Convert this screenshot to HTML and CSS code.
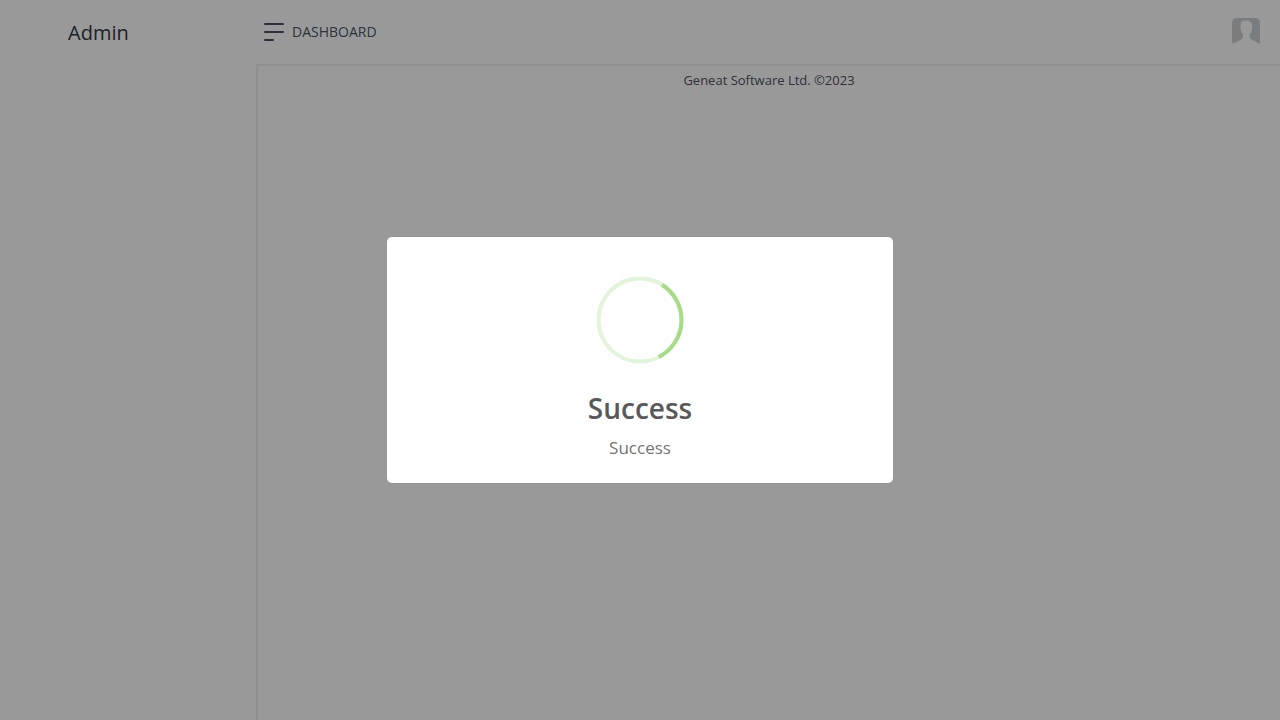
FILE: index.html
```html
<!DOCTYPE html>
<html lang="en">
<head>
  <meta charset="utf-8">
  <meta name="viewport" content="width=device-width, initial-scale=1">
  <title>Dashboard</title>
  <link rel="stylesheet" href="styles.css">
</head>
<body>
  <div class="layout">
    <aside class="sidebar">
      <h1 class="brand">Admin</h1>
    </aside>
    <div class="main">
      <header class="topbar">
        <button class="menu-button" type="button" aria-label="Toggle menu">
          <svg width="20" height="20" viewBox="0 0 20 20" fill="none" stroke="currentColor" stroke-width="2" stroke-linecap="round" aria-hidden="true">
            <path d="M1 2H19M1 10H19M1 18H9"/>
          </svg>
        </button>
        <span class="page-title">DASHBOARD</span>
        <button class="avatar" type="button" aria-label="Account">
          <svg width="28" height="28" viewBox="0 0 28 28" aria-hidden="true">
            <path fill="currentColor" d="M5 0H23Q28 0 28 5V26L19.500 21.500Q17.500 20.500 17.500 18.500V16.500Q19.500 14 20 11V7.500Q20 2.500 14 2.500T8.500 7.500V11Q9 14 11 16.500V18.500Q11 20.500 9 21.500L1 26Q0 24 0 23V5Q0 0 5 0Z"/>
          </svg>
        </button>
      </header>
      <main class="content">
        <footer class="footer">Geneat Software Ltd. ©2023</footer>
      </main>
    </div>
  </div>

  <div class="overlay">
    <div class="dialog" role="dialog" aria-modal="true" aria-labelledby="dialog-title" aria-describedby="dialog-text">
      <svg class="dialog-icon" width="88" height="88" viewBox="0 0 88 88" fill="none" stroke-width="4" aria-hidden="true">
        <circle cx="44" cy="44" r="41.500" stroke="#e4f4db"/>
        <path d="M66 8.800A41.500 41.500 0 0 1 62.800 81" stroke="#a5dc86"/>
      </svg>
      <h2 class="dialog-title" id="dialog-title">Success</h2>
      <p class="dialog-text" id="dialog-text">Success</p>
    </div>
  </div>
</body>
</html>
```
FILE: styles.css
```css
* {
  box-sizing: border-box;
}

body {
  margin: 0;
  background: #fff;
  color: #4b5563;
  font: 13px/20px "Open Sans", "Noto Sans", sans-serif;
}

.layout {
  display: flex;
  min-height: 100vh;
}

.sidebar {
  width: 256px;
  flex: none;
  padding: 0 68px;
}

.brand {
  margin: 0;
  color: #303846;
  font-size: 20px;
  font-weight: 500;
  line-height: 66px;
}

.main {
  flex: 1;
  display: flex;
  flex-direction: column;
}

.topbar {
  height: 64px;
  display: flex;
  align-items: center;
  padding: 0 20px 0 8px;
}

.menu-button,
.avatar {
  display: flex;
  border: 0;
  padding: 0;
  background: none;
  cursor: pointer;
}

.menu-button {
  margin-right: 8px;
  color: #475066;
}

.page-title {
  font-size: 14px;
  font-weight: 500;
}

.avatar {
  margin-left: auto;
  color: #cbd1d5;
}

.content {
  flex: 1;
  border-top: 2px solid #eee;
  border-left: 2px solid #eee;
}

.footer {
  padding: 4px 0;
  text-align: center;
}

.overlay {
  position: fixed;
  inset: 0;
  display: flex;
  align-items: center;
  justify-content: center;
  padding: 10px;
  background: rgba(0, 0, 0, 0.4);
}

.dialog {
  width: 506px;
  max-width: 100%;
  padding: 39px 20px 23px;
  border-radius: 5px;
  background: #fff;
  text-align: center;
}

.dialog-icon {
  display: block;
  margin: 0 auto 24px;
}

.dialog-title {
  margin: 0;
  color: #595959;
  font-size: 28px;
  font-weight: 600;
  line-height: 40px;
}

.dialog-text {
  margin: 8px 0 0;
  color: #757575;
  font-size: 17px;
  line-height: 24px;
}
```
